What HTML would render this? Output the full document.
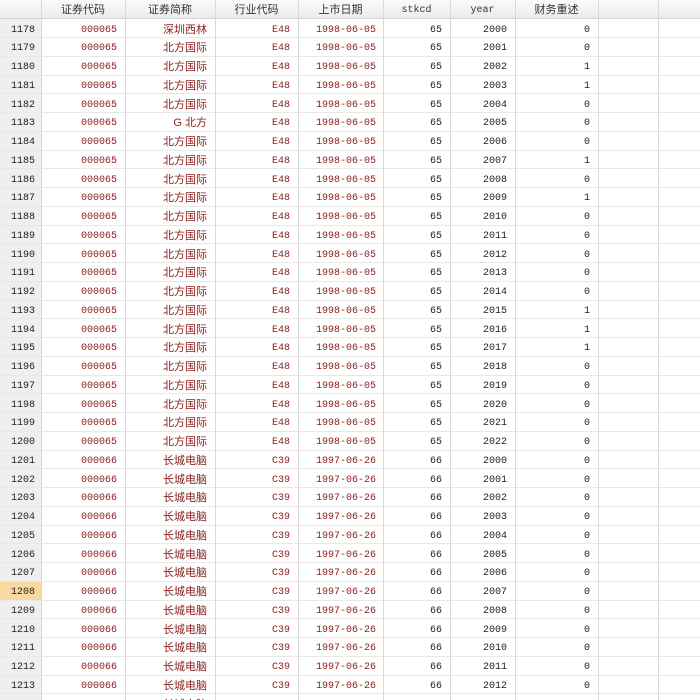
<!DOCTYPE html>
<html><head><meta charset="utf-8"><style>
html,body{margin:0;width:700px;height:700px;overflow:hidden;}
body{background:#fff;position:relative;font-family:"Liberation Mono",monospace;font-size:10px;}
.hd{position:absolute;left:0;top:0;width:700px;height:19px;background:linear-gradient(#fafafa,#ececec);border-bottom:1px solid #d4d4d4;box-sizing:border-box}
.rnbg{position:absolute;left:0;top:19px;width:41px;height:681px;background:#efefef}
.v{position:absolute;top:0;height:700px;width:1px;background:#d9d9d9}
.r{position:absolute;left:0;width:700px;height:19px;border-bottom:1px solid #e8e8e8;box-sizing:border-box}
.r span,.hd span{position:absolute;top:0;height:18px;display:flex;align-items:center;justify-content:flex-end;box-sizing:border-box;white-space:nowrap}
.r span{padding-top:4px}
.hd span{justify-content:center;color:#333;font-family:"Liberation Sans","Noto Sans CJK SC",sans-serif;font-size:11px}
.hd span.m{font-family:"Liberation Mono",monospace;font-size:10px;padding-top:3px}
.a{left:0;width:41px;padding-right:6px;color:#222}
.b{left:41px;width:84px;padding-right:8px;color:#8b2020}
.c{left:125px;width:90px;padding-right:8px;color:#8b2020;font-family:"Liberation Sans","Noto Sans CJK SC",sans-serif;font-size:11px}
.d{left:215px;width:83px;padding-right:8px;color:#8b2020}
.e{left:298px;width:85px;padding-right:7px;color:#8b2020}
.f{left:383px;width:67px;padding-right:8px;color:#222}
.g{left:450px;width:65px;padding-right:8px;color:#222}
.h{left:515px;width:83px;padding-right:8px;color:#222}
.hl{background:#f8d9a0}
.r span.c{padding-top:1px}
</style></head><body>
<div class="rnbg"></div>
<div class="hd"><span class="b" style="padding:0">证券代码</span><span class="c" style="padding:0;color:#333">证券简称</span><span class="d" style="padding:0;color:#333">行业代码</span><span class="e" style="padding:0;color:#333">上市日期</span><span class="f m" style="padding-right:0">stkcd</span><span class="g m" style="padding-right:0">year</span><span class="h" style="padding:0">财务重述</span></div>
<div class="r" style="top:19px"><span class="a">1178</span><span class="b">000065</span><span class="c">深圳西林</span><span class="d">E48</span><span class="e">1998-06-05</span><span class="f">65</span><span class="g">2000</span><span class="h">0</span></div>
<div class="r" style="top:37.75px"><span class="a">1179</span><span class="b">000065</span><span class="c">北方国际</span><span class="d">E48</span><span class="e">1998-06-05</span><span class="f">65</span><span class="g">2001</span><span class="h">0</span></div>
<div class="r" style="top:56.5px"><span class="a">1180</span><span class="b">000065</span><span class="c">北方国际</span><span class="d">E48</span><span class="e">1998-06-05</span><span class="f">65</span><span class="g">2002</span><span class="h">1</span></div>
<div class="r" style="top:75.25px"><span class="a">1181</span><span class="b">000065</span><span class="c">北方国际</span><span class="d">E48</span><span class="e">1998-06-05</span><span class="f">65</span><span class="g">2003</span><span class="h">1</span></div>
<div class="r" style="top:94px"><span class="a">1182</span><span class="b">000065</span><span class="c">北方国际</span><span class="d">E48</span><span class="e">1998-06-05</span><span class="f">65</span><span class="g">2004</span><span class="h">0</span></div>
<div class="r" style="top:112.75px"><span class="a">1183</span><span class="b">000065</span><span class="c">G 北方</span><span class="d">E48</span><span class="e">1998-06-05</span><span class="f">65</span><span class="g">2005</span><span class="h">0</span></div>
<div class="r" style="top:131.5px"><span class="a">1184</span><span class="b">000065</span><span class="c">北方国际</span><span class="d">E48</span><span class="e">1998-06-05</span><span class="f">65</span><span class="g">2006</span><span class="h">0</span></div>
<div class="r" style="top:150.25px"><span class="a">1185</span><span class="b">000065</span><span class="c">北方国际</span><span class="d">E48</span><span class="e">1998-06-05</span><span class="f">65</span><span class="g">2007</span><span class="h">1</span></div>
<div class="r" style="top:169px"><span class="a">1186</span><span class="b">000065</span><span class="c">北方国际</span><span class="d">E48</span><span class="e">1998-06-05</span><span class="f">65</span><span class="g">2008</span><span class="h">0</span></div>
<div class="r" style="top:187.75px"><span class="a">1187</span><span class="b">000065</span><span class="c">北方国际</span><span class="d">E48</span><span class="e">1998-06-05</span><span class="f">65</span><span class="g">2009</span><span class="h">1</span></div>
<div class="r" style="top:206.5px"><span class="a">1188</span><span class="b">000065</span><span class="c">北方国际</span><span class="d">E48</span><span class="e">1998-06-05</span><span class="f">65</span><span class="g">2010</span><span class="h">0</span></div>
<div class="r" style="top:225.25px"><span class="a">1189</span><span class="b">000065</span><span class="c">北方国际</span><span class="d">E48</span><span class="e">1998-06-05</span><span class="f">65</span><span class="g">2011</span><span class="h">0</span></div>
<div class="r" style="top:244px"><span class="a">1190</span><span class="b">000065</span><span class="c">北方国际</span><span class="d">E48</span><span class="e">1998-06-05</span><span class="f">65</span><span class="g">2012</span><span class="h">0</span></div>
<div class="r" style="top:262.75px"><span class="a">1191</span><span class="b">000065</span><span class="c">北方国际</span><span class="d">E48</span><span class="e">1998-06-05</span><span class="f">65</span><span class="g">2013</span><span class="h">0</span></div>
<div class="r" style="top:281.5px"><span class="a">1192</span><span class="b">000065</span><span class="c">北方国际</span><span class="d">E48</span><span class="e">1998-06-05</span><span class="f">65</span><span class="g">2014</span><span class="h">0</span></div>
<div class="r" style="top:300.25px"><span class="a">1193</span><span class="b">000065</span><span class="c">北方国际</span><span class="d">E48</span><span class="e">1998-06-05</span><span class="f">65</span><span class="g">2015</span><span class="h">1</span></div>
<div class="r" style="top:319px"><span class="a">1194</span><span class="b">000065</span><span class="c">北方国际</span><span class="d">E48</span><span class="e">1998-06-05</span><span class="f">65</span><span class="g">2016</span><span class="h">1</span></div>
<div class="r" style="top:337.75px"><span class="a">1195</span><span class="b">000065</span><span class="c">北方国际</span><span class="d">E48</span><span class="e">1998-06-05</span><span class="f">65</span><span class="g">2017</span><span class="h">1</span></div>
<div class="r" style="top:356.5px"><span class="a">1196</span><span class="b">000065</span><span class="c">北方国际</span><span class="d">E48</span><span class="e">1998-06-05</span><span class="f">65</span><span class="g">2018</span><span class="h">0</span></div>
<div class="r" style="top:375.25px"><span class="a">1197</span><span class="b">000065</span><span class="c">北方国际</span><span class="d">E48</span><span class="e">1998-06-05</span><span class="f">65</span><span class="g">2019</span><span class="h">0</span></div>
<div class="r" style="top:394px"><span class="a">1198</span><span class="b">000065</span><span class="c">北方国际</span><span class="d">E48</span><span class="e">1998-06-05</span><span class="f">65</span><span class="g">2020</span><span class="h">0</span></div>
<div class="r" style="top:412.75px"><span class="a">1199</span><span class="b">000065</span><span class="c">北方国际</span><span class="d">E48</span><span class="e">1998-06-05</span><span class="f">65</span><span class="g">2021</span><span class="h">0</span></div>
<div class="r" style="top:431.5px"><span class="a">1200</span><span class="b">000065</span><span class="c">北方国际</span><span class="d">E48</span><span class="e">1998-06-05</span><span class="f">65</span><span class="g">2022</span><span class="h">0</span></div>
<div class="r" style="top:450.25px"><span class="a">1201</span><span class="b">000066</span><span class="c">长城电脑</span><span class="d">C39</span><span class="e">1997-06-26</span><span class="f">66</span><span class="g">2000</span><span class="h">0</span></div>
<div class="r" style="top:469px"><span class="a">1202</span><span class="b">000066</span><span class="c">长城电脑</span><span class="d">C39</span><span class="e">1997-06-26</span><span class="f">66</span><span class="g">2001</span><span class="h">0</span></div>
<div class="r" style="top:487.75px"><span class="a">1203</span><span class="b">000066</span><span class="c">长城电脑</span><span class="d">C39</span><span class="e">1997-06-26</span><span class="f">66</span><span class="g">2002</span><span class="h">0</span></div>
<div class="r" style="top:506.5px"><span class="a">1204</span><span class="b">000066</span><span class="c">长城电脑</span><span class="d">C39</span><span class="e">1997-06-26</span><span class="f">66</span><span class="g">2003</span><span class="h">0</span></div>
<div class="r" style="top:525.25px"><span class="a">1205</span><span class="b">000066</span><span class="c">长城电脑</span><span class="d">C39</span><span class="e">1997-06-26</span><span class="f">66</span><span class="g">2004</span><span class="h">0</span></div>
<div class="r" style="top:544px"><span class="a">1206</span><span class="b">000066</span><span class="c">长城电脑</span><span class="d">C39</span><span class="e">1997-06-26</span><span class="f">66</span><span class="g">2005</span><span class="h">0</span></div>
<div class="r" style="top:562.75px"><span class="a">1207</span><span class="b">000066</span><span class="c">长城电脑</span><span class="d">C39</span><span class="e">1997-06-26</span><span class="f">66</span><span class="g">2006</span><span class="h">0</span></div>
<div class="r" style="top:581.5px"><span class="a hl">1208</span><span class="b">000066</span><span class="c">长城电脑</span><span class="d">C39</span><span class="e">1997-06-26</span><span class="f">66</span><span class="g">2007</span><span class="h">0</span></div>
<div class="r" style="top:600.25px"><span class="a">1209</span><span class="b">000066</span><span class="c">长城电脑</span><span class="d">C39</span><span class="e">1997-06-26</span><span class="f">66</span><span class="g">2008</span><span class="h">0</span></div>
<div class="r" style="top:619px"><span class="a">1210</span><span class="b">000066</span><span class="c">长城电脑</span><span class="d">C39</span><span class="e">1997-06-26</span><span class="f">66</span><span class="g">2009</span><span class="h">0</span></div>
<div class="r" style="top:637.75px"><span class="a">1211</span><span class="b">000066</span><span class="c">长城电脑</span><span class="d">C39</span><span class="e">1997-06-26</span><span class="f">66</span><span class="g">2010</span><span class="h">0</span></div>
<div class="r" style="top:656.5px"><span class="a">1212</span><span class="b">000066</span><span class="c">长城电脑</span><span class="d">C39</span><span class="e">1997-06-26</span><span class="f">66</span><span class="g">2011</span><span class="h">0</span></div>
<div class="r" style="top:675.25px"><span class="a">1213</span><span class="b">000066</span><span class="c">长城电脑</span><span class="d">C39</span><span class="e">1997-06-26</span><span class="f">66</span><span class="g">2012</span><span class="h">0</span></div>
<div class="r" style="top:694px"><span class="a">1214</span><span class="b">000066</span><span class="c">长城电脑</span><span class="d">C39</span><span class="e">1997-06-26</span><span class="f">66</span><span class="g">2013</span><span class="h">0</span></div>
<div class="v" style="left:41px"></div><div class="v" style="left:125px"></div><div class="v" style="left:215px"></div><div class="v" style="left:298px"></div><div class="v" style="left:383px"></div><div class="v" style="left:450px"></div><div class="v" style="left:515px"></div><div class="v" style="left:598px"></div><div class="v" style="left:658px"></div>
</body></html>
